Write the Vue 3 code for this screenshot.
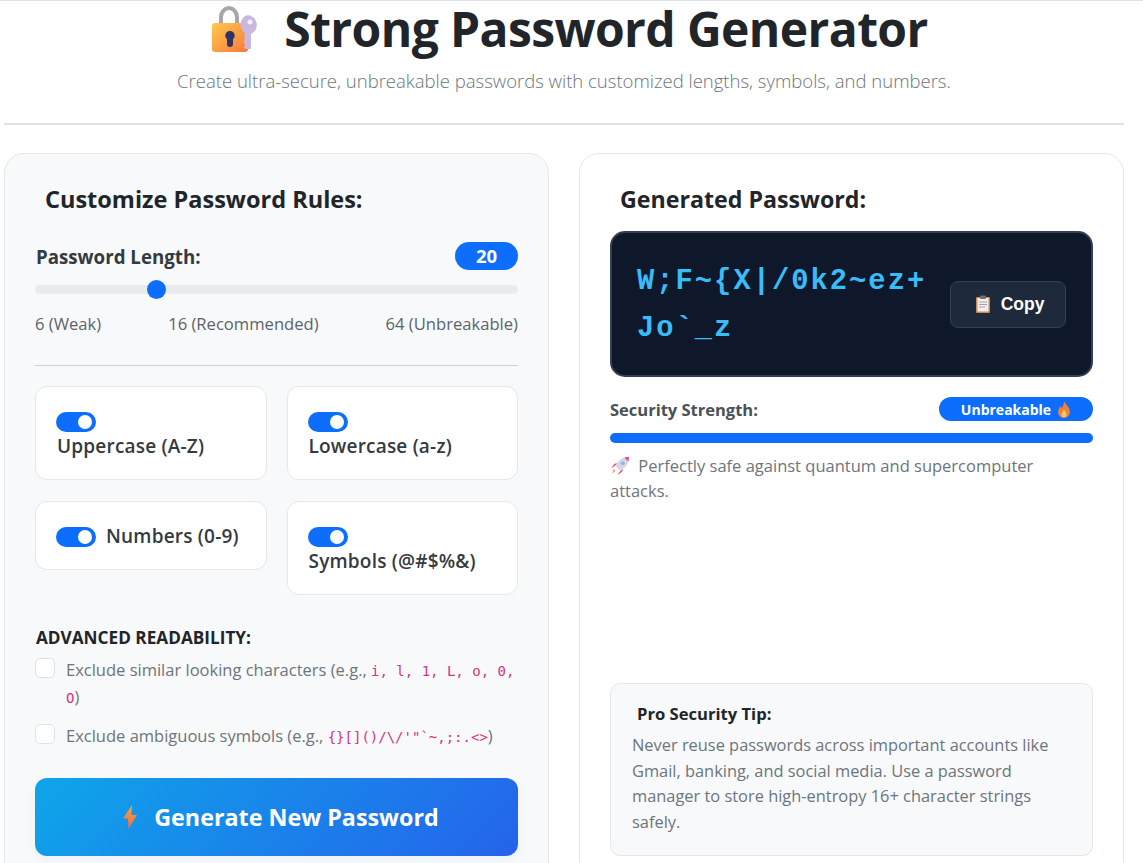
<template>
  <div class="page">
    <header class="hero">
      <h1>
        <svg class="lock-icon" viewBox="0 0 48 48" aria-hidden="true">
          <defs>
            <linearGradient id="lockBody" x1="0" y1="0" x2="1" y2="1">
              <stop offset="0" stop-color="#ffc94d" />
              <stop offset="1" stop-color="#f5793b" />
            </linearGradient>
          </defs>
          <path d="M10 19v-7c0-5 4-9 8-9s8 4 8 9v7" fill="none" stroke="#a9a6ab" stroke-width="4" />
          <rect x="1" y="18" width="36" height="29" rx="3" fill="url(#lockBody)" />
          <path d="M19 26a4.500 4.500 0 0 1 3 8v5a3 3 0 0 1-6 0v-5a4.500 4.500 0 0 1 3-8z" fill="#2f3264" />
          <path d="M37 10a10 10 0 0 1 3 19v15h-4c-2 0-3-1-3-2 2-2 1-4-1-5 2-2 2-4 1-6l1-3a10 10 0 0 1 3-18z" fill="#c9b8e0" />
          <circle cx="39" cy="17" r="2.500" fill="#f3effa" />
        </svg>
        <span>Strong Password Generator</span>
      </h1>
      <p>Create ultra-secure, unbreakable passwords with customized lengths, symbols, and numbers.</p>
    </header>

    <main class="columns">
      <section class="card card-left">
        <h2>Customize Password Rules:</h2>

        <div class="length-row">
          <label for="length">Password Length:</label>
          <span class="length-badge">{{ length }}</span>
        </div>
        <input id="length" v-model.number="length" class="slider" type="range" min="6" max="64" />
        <div class="scale">
          <span>6 (Weak)</span>
          <span>16 (Recommended)</span>
          <span>64 (Unbreakable)</span>
        </div>

        <hr />

        <div class="toggles">
          <label v-for="opt in options" :key="opt.label" class="toggle-card">
            <input v-model="opt.on" class="switch" type="checkbox" />
            <span class="toggle-text">{{ opt.label }}</span>
          </label>
        </div>

        <h3>ADVANCED READABILITY:</h3>
        <label class="check">
          <input type="checkbox" />
          <span>Exclude similar looking characters (e.g., <code>i, l, 1, L, o, 0, O</code>)</span>
        </label>
        <label class="check">
          <input type="checkbox" />
          <span>Exclude ambiguous symbols (e.g., <code>{}[]()/\/'"`~,;:.&lt;&gt;</code>)</span>
        </label>

        <button class="generate" type="button">
          <svg class="bolt" viewBox="0 0 14 24" aria-hidden="true">
            <defs>
              <linearGradient id="boltFill" x1="0" y1="0" x2="0" y2="1">
                <stop offset="0" stop-color="#f9a23c" />
                <stop offset="1" stop-color="#ee6a4a" />
              </linearGradient>
            </defs>
            <path d="M9 0 0 13.500h5L5.500 24 14 10H8.500z" fill="url(#boltFill)" />
          </svg>
          <span>Generate New Password</span>
        </button>
      </section>

      <section class="card card-right">
        <h2>Generated Password:</h2>

        <div class="password-box">
          <div class="password">{{ password }}</div>
          <button class="copy" type="button">
            <svg class="clip" viewBox="0 0 16 18" aria-hidden="true">
              <rect x="1" y="2" width="14" height="16" rx="1" fill="#c98a4b" />
              <rect x="2.500" y="3" width="11" height="13.500" fill="#f1edf0" />
              <rect x="5" y="0.500" width="6" height="3.500" rx="1" fill="#6f6b78" />
              <path d="M4 7h8M4 9.500h8M4 12h6" stroke="#a7a3ad" stroke-width="1" />
            </svg>
            <span>Copy</span>
          </button>
        </div>

        <div class="strength-row">
          <span class="strength-label">Security Strength:</span>
          <span class="strength-badge">
            Unbreakable
            <svg class="flame" viewBox="0 0 12 16" aria-hidden="true">
              <path d="M6 0c1 3 5 5 5.500 9.500C12 13 9.500 16 6 16S0 13 .5 9.500C.8 7.500 2 6.500 2.500 5c.8.600 1.200 1.300 1.300 2C5 5 6.300 3 6 0z" fill="#f0803c" />
              <path d="M6 8c.5 1.500 2.500 2.500 2.500 4.500C8.500 14.500 7.500 15.500 6 15.500s-2.500-1-2.500-3C3.500 10.500 5.500 10 6 8z" fill="#fcc46a" />
            </svg>
          </span>
        </div>
        <div class="bar"><div class="bar-fill" :style="{ width: strength + '%' }"></div></div>
        <p class="strength-text">
          <svg class="rocket" viewBox="0 0 18 18" aria-hidden="true">
            <path d="M3 10 1 11l3-4 3-.5zM8 15l-1 2 4-3 .5-3z" fill="#e8499a" />
            <path d="M5 9c2-5 6-8 12-8 0 6-3 10-8 12z" fill="#d9d5e0" />
            <path d="M13 1.500c1.500-.5 3-.5 4-.5 0 1 0 2.500-.5 4z" fill="#e8499a" />
            <circle cx="11.500" cy="6.500" r="1.700" fill="#7cc0ee" />
            <path d="M5 13l-3 3 1-4z" fill="#f79a45" />
          </svg>
          Perfectly safe against quantum and supercomputer attacks.
        </p>

        <div class="tip">
          <h4>Pro Security Tip:</h4>
          <p>Never reuse passwords across important accounts like Gmail, banking, and social media. Use a password manager to store high-entropy 16+ character strings safely.</p>
        </div>
      </section>
    </main>
  </div>
</template>

<script setup>
import { computed, reactive, ref } from 'vue'

const length = ref(20)
const password = 'W;F~{X|/0k2~ez+Jo`_z'

const options = reactive([
  { label: 'Uppercase (A-Z)', on: true },
  { label: 'Lowercase (a-z)', on: true },
  { label: 'Numbers (0-9)', on: true },
  { label: 'Symbols (@#$%&)', on: true }
])

const strength = computed(() => Math.min(100, length.value * 5))
</script>

<style>
html, body {
  overflow: hidden;
  background: #fff;
}
</style>

<style scoped>
.page {
  box-sizing: border-box;
  min-height: 100vh;
  padding: 0 19px 20px 4px;
  border-top: 1px solid #dee2e6;
  font-family: "Open Sans", sans-serif;
  color: #212529;
}

.hero {
  height: 122px;
  border-bottom: 2px solid #dee2e6;
  text-align: center;
}

.hero h1 {
  display: flex;
  justify-content: center;
  align-items: center;
  gap: 25px;
  margin: 0 0 0 11px;
  height: 56px;
  font-size: 48px;
  line-height: 1;
  font-weight: 700;
  letter-spacing: -0.6px;
}

.lock-icon {
  width: 48px;
  height: 48px;
}

.hero p {
  margin: 11px 0 0;
  font-size: 18.500px;
  font-weight: 300;
  color: #6c757d;
}

.columns {
  display: grid;
  grid-template-columns: 1fr 1fr;
  gap: 30px;
  margin-top: 28px;
}

.card {
  display: flex;
  flex-direction: column;
  box-sizing: border-box;
  padding: 30px;
  border: 1px solid #e4e7eb;
  border-radius: 20px;
}

.card-left {
  background: #f8f9fa;
}

.card-right {
  background: #fff;
}

h2 {
  margin: 0 0 28px 10px;
  height: 30px;
  font-size: 23.500px;
  line-height: 30px;
  font-weight: 700;
}

.card-right h2 {
  margin-bottom: 17px;
  font-size: 23.200px;
}

.length-row {
  display: flex;
  justify-content: space-between;
  align-items: center;
  height: 28px;
  font-size: 18.700px;
  font-weight: 700;
  color: #343a40;
}

.length-row label {
  padding: 1px 0 0 1px;
}

.length-badge {
  width: 63px;
  height: 28px;
  border-radius: 14px;
  background: #0d6efd;
  color: #fff;
  font-size: 18.500px;
  line-height: 28px;
  text-align: center;
}

.slider {
  display: block;
  width: 100%;
  height: 19px;
  margin: 10px 0 0;
  background: transparent;
  appearance: none;
  -webkit-appearance: none;
}

.slider::-webkit-slider-runnable-track {
  height: 9px;
  border-radius: 5px;
  background: #e9ecef;
}

.slider::-webkit-slider-thumb {
  width: 19px;
  height: 19px;
  margin-top: -5px;
  border-radius: 50%;
  background: #0d6efd;
  appearance: none;
  -webkit-appearance: none;
}

.scale {
  display: flex;
  justify-content: space-between;
  margin-top: 13px;
  font-size: 16.600px;
  line-height: 24px;
  color: #5c636a;
}

hr {
  width: 100%;
  margin: 29px 0 20px;
  border: 0;
  border-top: 1px solid #ced1d4;
}

.toggles {
  display: grid;
  grid-template-columns: 1fr 1fr;
  gap: 21px 20px;
  align-items: start;
}

.toggle-card {
  padding: 22px 21px 20px;
  border: 1px solid #e4e7eb;
  border-radius: 12px;
  background: #fff;
  font-size: 19px;
  line-height: 25px;
  font-weight: 600;
  letter-spacing: 0.2px;
  color: #343a40;
}

.toggle-text {
  display: inline-block;
}

.switch {
  position: relative;
  width: 40px;
  height: 20px;
  margin: 0 10px 0 -1px;
  border-radius: 10px;
  background: #0d6efd;
  vertical-align: -4px;
  appearance: none;
  -webkit-appearance: none;
}

.switch::after {
  content: "";
  position: absolute;
  top: 3px;
  right: 4px;
  width: 14px;
  height: 14px;
  border-radius: 50%;
  background: #fff;
}

h3 {
  margin: 31px 0 7px 1px;
  font-size: 17.200px;
  line-height: 24px;
  font-weight: 700;
}

.check {
  display: flex;
  gap: 11px;
  margin-bottom: 12px;
  font-size: 16.500px;
  line-height: 26px;
  color: #6c757d;
}

.check input {
  flex: none;
  width: 20px;
  height: 20px;
  margin: 1px 0 0;
  border: 1px solid #dee2e6;
  border-radius: 5px;
  background: #fff;
  appearance: none;
  -webkit-appearance: none;
}

code {
  font-family: "DejaVu Sans Mono", monospace;
  font-size: 14px;
  color: #d63384;
}

.generate {
  display: flex;
  justify-content: center;
  align-items: center;
  gap: 17px;
  width: 100%;
  height: 78px;
  margin-top: 16px;
  padding: 0 0 0 9px;
  border: 0;
  border-radius: 12px;
  background: linear-gradient(135deg, #0ea5e9, #2563eb);
  box-shadow: 0 4px 10px rgba(37, 99, 235, 0.06);
  color: #fff;
  font-family: inherit;
  font-size: 23.300px;
  font-weight: 700;
  cursor: pointer;
}

.bolt {
  width: 14px;
  height: 24px;
}

.password-box {
  display: flex;
  align-items: center;
  justify-content: space-between;
  gap: 20px;
  box-sizing: border-box;
  height: 146px;
  padding: 0 25px;
  border: 2px solid #334155;
  border-radius: 15px;
  background: #0f172a;
}

.password {
  flex: 1;
  min-width: 0;
  padding-top: 1px;
  font-family: "Liberation Mono", monospace;
  font-size: 28.800px;
  line-height: 47px;
  font-weight: 700;
  letter-spacing: 2px;
  color: #38bdf8;
  word-break: break-all;
}

.copy {
  display: flex;
  flex: none;
  align-items: center;
  justify-content: center;
  gap: 10px;
  width: 116px;
  height: 47px;
  padding: 0 0 0 3px;
  border: 1px solid #334155;
  border-radius: 8px;
  background: #1e293b;
  color: #fff;
  font-family: "Liberation Sans", sans-serif;
  font-size: 17.500px;
  font-weight: 700;
  cursor: pointer;
}

.clip {
  width: 16px;
  height: 18px;
}

.strength-row {
  display: flex;
  justify-content: space-between;
  align-items: center;
  height: 24px;
  margin-top: 20px;
}

.strength-label {
  font-size: 16.500px;
  font-weight: 700;
  color: #495057;
}

.strength-badge {
  display: flex;
  align-items: center;
  justify-content: center;
  gap: 6px;
  width: 154px;
  height: 24px;
  border-radius: 12px;
  background: #0d6efd;
  color: #fff;
  font-size: 14px;
  font-weight: 700;
}

.flame {
  width: 14px;
  height: 17px;
}

.bar {
  height: 10px;
  margin-top: 12px;
  border-radius: 5px;
  background: #e9ecef;
  overflow: hidden;
}

.bar-fill {
  height: 100%;
  background: #0d6efd;
}

.strength-text {
  margin: 10px 0 0;
  font-size: 16.500px;
  line-height: 25px;
  color: #6c757d;
}

.rocket {
  width: 20px;
  height: 20px;
  margin-right: 4px;
  vertical-align: -4px;
}

.tip {
  box-sizing: border-box;
  margin-top: auto;
  padding: 19px 21px 21px;
  border: 1px solid #e4e7eb;
  border-radius: 10px;
  background: #f8f9fa;
}

.tip h4 {
  margin: 0 0 7px 5px;
  font-size: 16.600px;
  line-height: 22px;
  font-weight: 700;
}

.tip p {
  margin: 0;
  font-size: 16.400px;
  line-height: 25.500px;
  color: #6c757d;
}
</style>
